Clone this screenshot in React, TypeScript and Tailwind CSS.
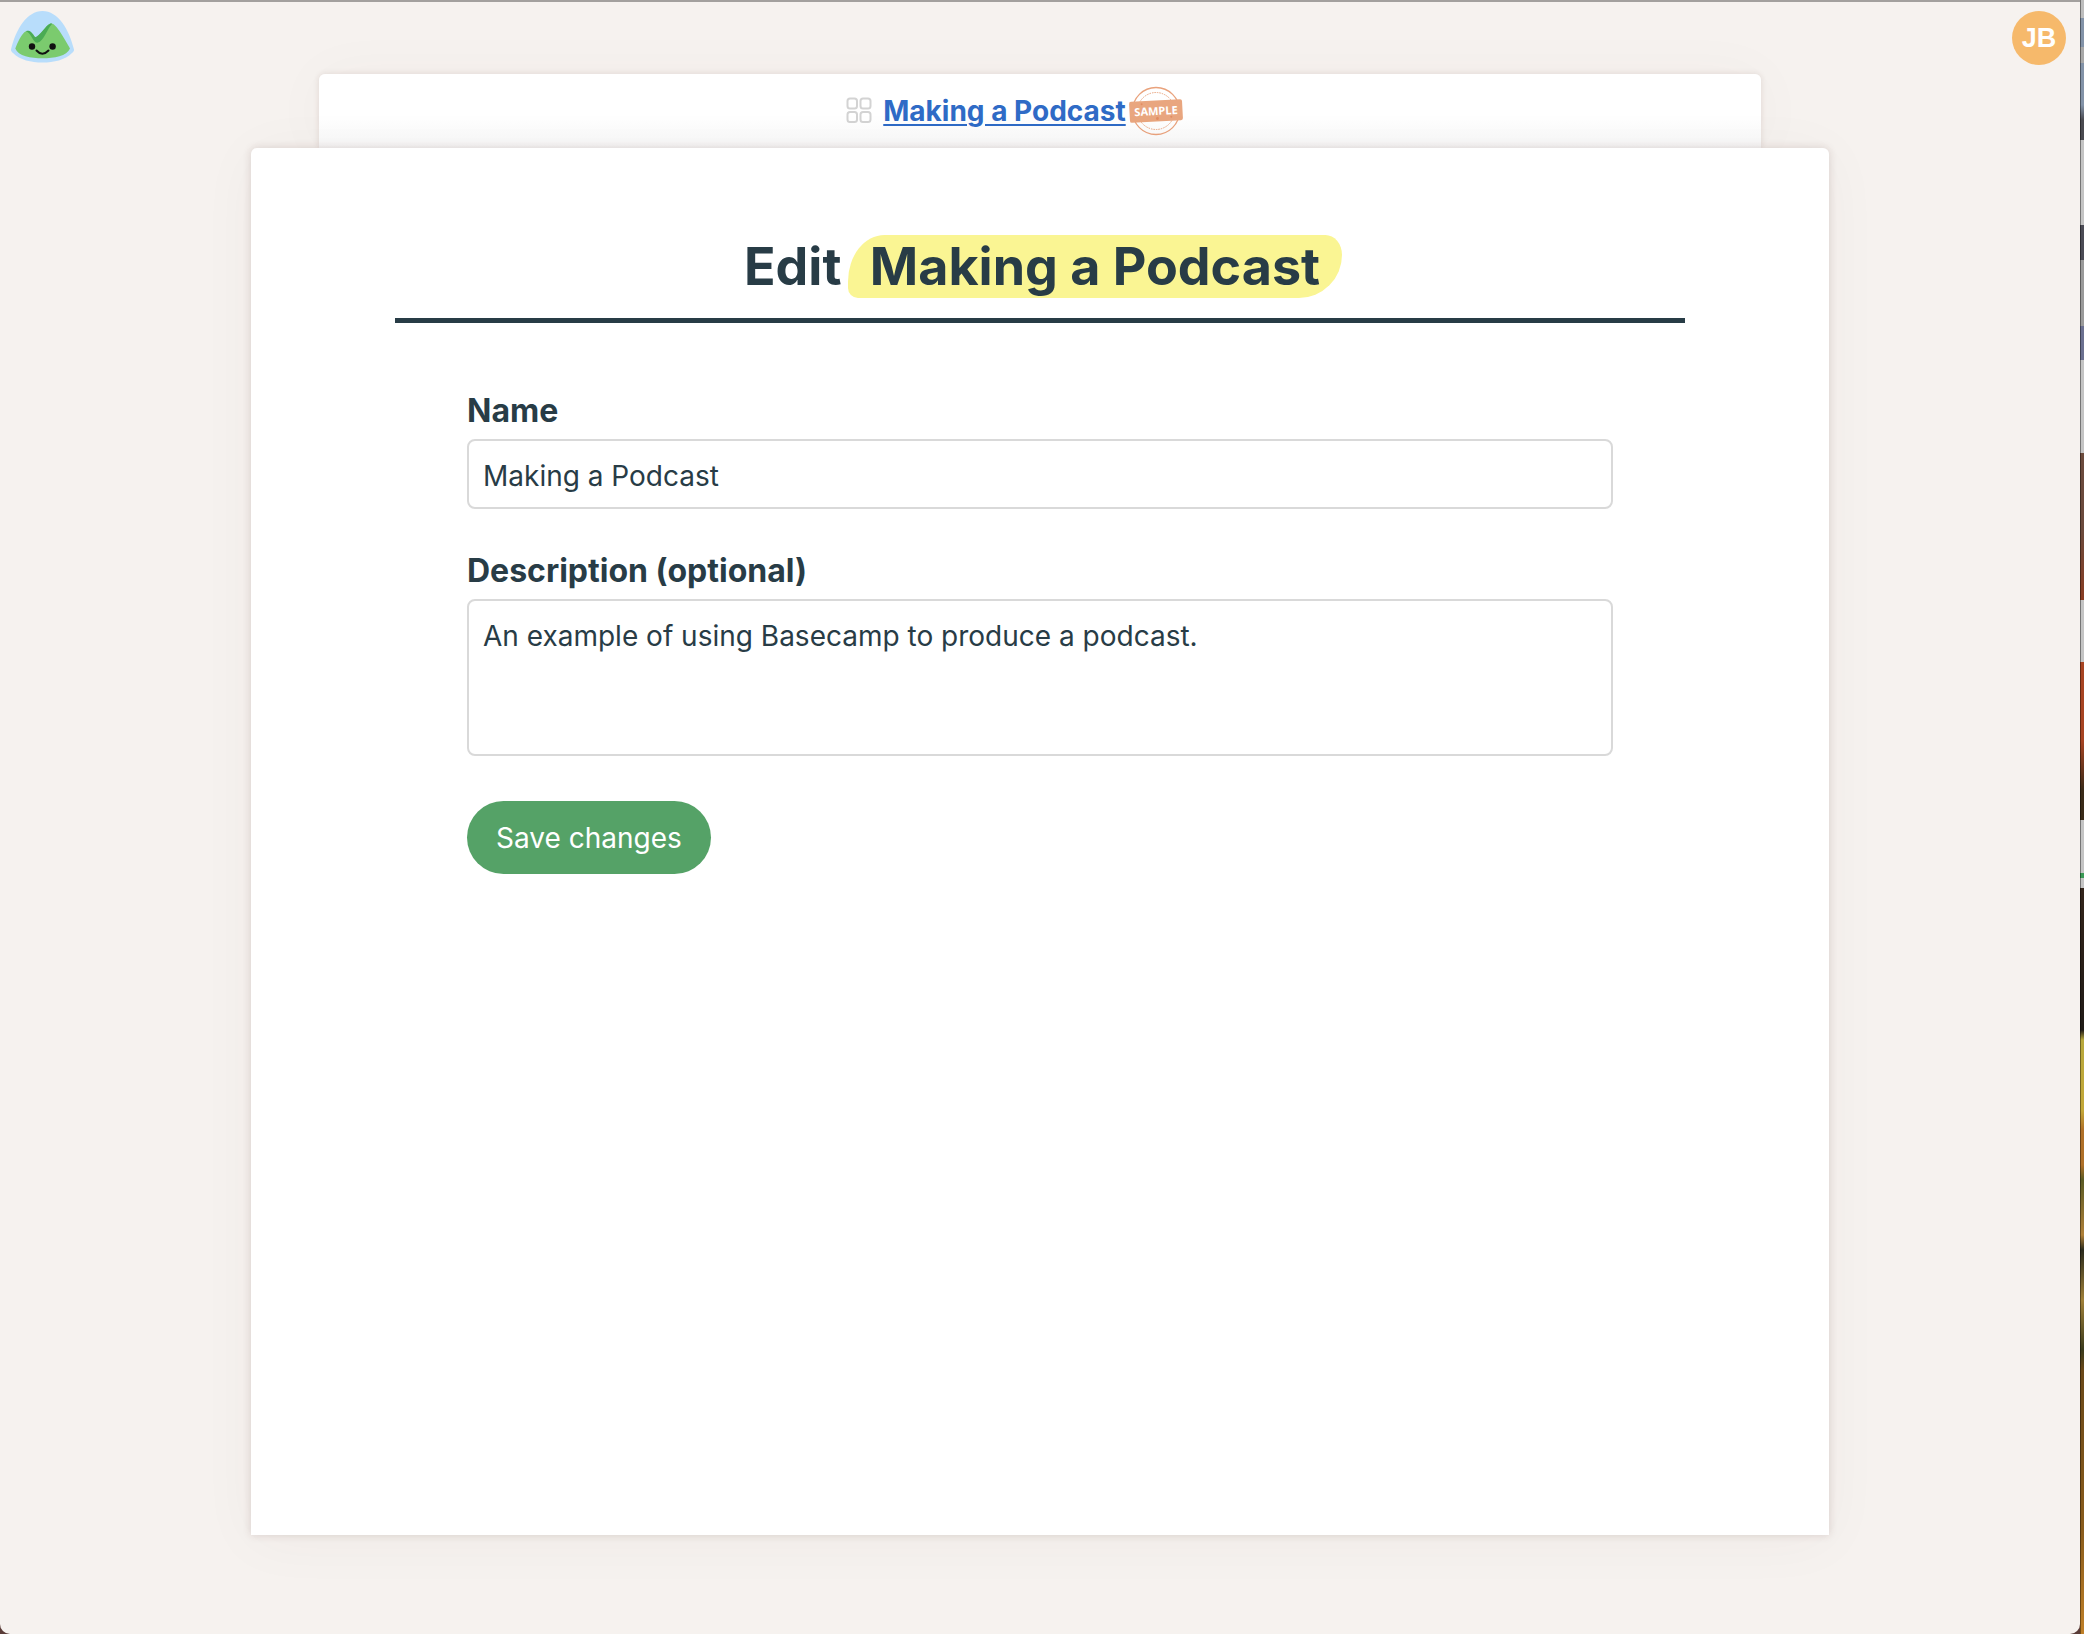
import React from "react";

function BasecampLogo() {
  return (
    <svg viewBox="0 0 63 52" className="h-[52px] w-[63px]" aria-hidden="true">
      <path
        d="M31.5 0C16 0 5 18 0 38.5C-.2 40 1 41 2 42C9 49 20 51.5 31.5 51.5S54 49 61 42C62 41 63.200 40 63 38.500C58 18 47 0 31.500 0Z"
        fill="#b8ddfb"
      />
      <path
        d="M4.300 37.500C7 31 10.500 22.500 15 20.300C18 19.300 20.500 21 24.500 26.500C29 25.500 35.500 13.500 39 12.700C42 11.500 45 15 48.500 20C52 25.500 56 32 59 37.500C56 45 43 47.300 31.500 47.300S7 45 4.300 37.500Z"
        fill="#7bcb6e"
      />
      <path
        d="M15 20.200C18 19 20.500 20.500 24 26.300C28.500 25.500 35 14 39 12.700C40 12.300 40.700 12.500 41.200 12.800C36.500 17 33 30.500 26.500 31.800C22 32 20.500 22 15 20.200Z"
        fill="#4aab54"
      />
      <circle cx="21" cy="35.500" r="3.200" fill="#111" />
      <circle cx="41.600" cy="35.500" r="3.200" fill="#111" />
      <path d="M25.500 39.500Q31.300 46 37.500 39.500" fill="none" stroke="#111" strokeWidth="2" strokeLinecap="round" />
    </svg>
  );
}

function GridIcon() {
  return (
    <svg viewBox="0 0 26 26" className="h-[26px] w-[26px]" fill="none" stroke="#d3d3d3" strokeWidth="2" aria-hidden="true">
      <rect x="1.500" y="1.500" width="9.500" height="10" rx="2.500" />
      <rect x="14.500" y="1.500" width="10" height="10" rx="2.500" />
      <rect x="1.500" y="15" width="9.500" height="10" rx="2.500" />
      <rect x="14.500" y="15" width="10" height="10" rx="2.500" />
    </svg>
  );
}

function SampleStamp() {
  return (
    <svg viewBox="0 0 56 50" className="h-[50px] w-[56px]" role="img" aria-label="Sample">
      <circle cx="28" cy="25" r="23.500" fill="none" stroke="#e9a27c" strokeWidth="1.300" />
      <circle cx="28" cy="25" r="18.500" fill="none" stroke="#e9a27c" strokeWidth="1" strokeDasharray="1.500 1" />
      <g transform="rotate(-3 28 25)">
        <rect x="1.500" y="14.500" width="53" height="21" rx="2" fill="#e9a67f" />
        <circle cx="14" cy="17.500" r="1" fill="#e28d63" />
        <circle cx="29" cy="32.500" r="1.500" fill="#e28d63" />
        <circle cx="43" cy="31.500" r="1" fill="#e28d63" />
        <text
          x="28"
          y="29"
          textAnchor="middle"
          fill="#fff"
          className="font-['Open_Sans',sans-serif] text-[11px] font-bold"
        >
          SAMPLE
        </text>
      </g>
    </svg>
  );
}

export default function App() {
  return (
    <div className="flex min-h-screen bg-[#5a3c38] font-['Inter',sans-serif] text-[#283c46]">
      <div className="relative flex min-w-0 flex-1 flex-col rounded-b-[10px] border-t-2 border-[#a3a09e] bg-[#f6f2ef]">
        <header className="absolute inset-x-0 top-0 flex items-start justify-between pt-[9px] pr-[14px] pl-[11px]">
          <a href="#home" aria-label="Basecamp home">
            <BasecampLogo />
          </a>
          <button
            type="button"
            className="flex size-[54px] items-center justify-center rounded-full bg-[#f6b96b] font-['Liberation_Sans',sans-serif] text-[27px] font-bold text-white"
          >
            JB
          </button>
        </header>

        <nav className="mx-auto mt-[72px] flex h-[74px] w-full max-w-[1442px] items-center justify-center rounded-t-md bg-linear-to-b from-white from-60% to-[#f7f7f7] pr-[50px] shadow-[0_0_6px_rgba(80,40,30,0.12),0_0_60px_rgba(80,40,30,0.03)]">
          <span className="pb-[3px]">
            <GridIcon />
          </span>
          <a
            href="#project"
            className="ml-[11px] text-[28px] leading-8 font-bold text-[#2f6bc6] underline decoration-2 underline-offset-[3px]"
          >
            Making a Podcast
          </a>
          <span className="ml-0.5">
            <SampleStamp />
          </span>
        </nav>

        <main className="relative mx-auto mb-[99px] w-full max-w-[1578px] flex-1 rounded-t-md bg-white px-[144px] pt-[87px] shadow-[0_0_8px_rgba(80,40,30,0.16),0_6px_60px_rgba(80,40,30,0.04)]">
          <h1 className="border-b-[5px] border-[#283c46] pb-[19px] text-center text-[52px] leading-[64px] font-bold">
            Edit{" "}
            <mark className="-mx-1.5 rounded-[44px_20px_52px_12px/56px_24px_52px_12px] bg-[#faf593] px-[22px] text-[#283c46]">
              Making a Podcast
            </mark>
          </h1>

          <form className="px-[72px] pt-[66px]" onSubmit={(e) => e.preventDefault()}>
            <label htmlFor="name" className="block text-[32px] leading-[44px] font-bold">
              Name
            </label>
            <input
              id="name"
              type="text"
              defaultValue="Making a Podcast"
              className="mt-[6px] block h-[70px] w-full rounded-lg border-2 border-[#d9d9d9] px-[14px] pt-1 text-[28px] outline-none"
            />
            <label htmlFor="description" className="mt-[40px] block text-[32px] leading-[44px] font-bold">
              Description (optional)
            </label>
            <textarea
              id="description"
              defaultValue="An example of using Basecamp to produce a podcast."
              className="mt-[6px] block h-[157px] w-full resize-none rounded-lg border-2 border-[#d9d9d9] px-[14px] pt-[15px] text-[28px] leading-[40px] outline-none"
            />
            <button
              type="submit"
              className="mt-[45px] h-[73px] rounded-full bg-[#55a267] px-[29px] text-[28px] text-white"
            >
              Save changes
            </button>
          </form>
        </main>
      </div>
      <div
        aria-hidden="true"
        className="w-1 shrink-0 border-l border-black/40 bg-[linear-gradient(to_bottom,#bdbdbd_0_18px,#8393a8_18px_47px,#a8a8a8_47px_63px,#8393a8_63px_105px,#4a4a50_120px_140px,#c4c4c4_140px_225px,#4b4b55_225px_260px,#9a9a9a_260px_326px,#6b7090_326px_360px,#c4c4c4_360px_453px,#6b4a3c_453px_530px,#8a3c22_600px,#c4c4c4_600px_662px,#a84422_662px_740px,#3a2a18_790px_820px,#c4c4c4_820px_873px,#3a9a55_873px_878px,#c4c4c4_878px_888px,#33241a_888px,#201a16_1030px,#b8a83c_1040px,#c4a838_1110px,#b07028_1130px_1165px,#5a5a24_1180px,#b08038_1235px,#2a2a1c_1250px,#a08038_1300px,#3a3a1c_1350px,#6a4818_1370px,#8a5c1c_1530px,#c08028_1634px)]"
      />
    </div>
  );
}
